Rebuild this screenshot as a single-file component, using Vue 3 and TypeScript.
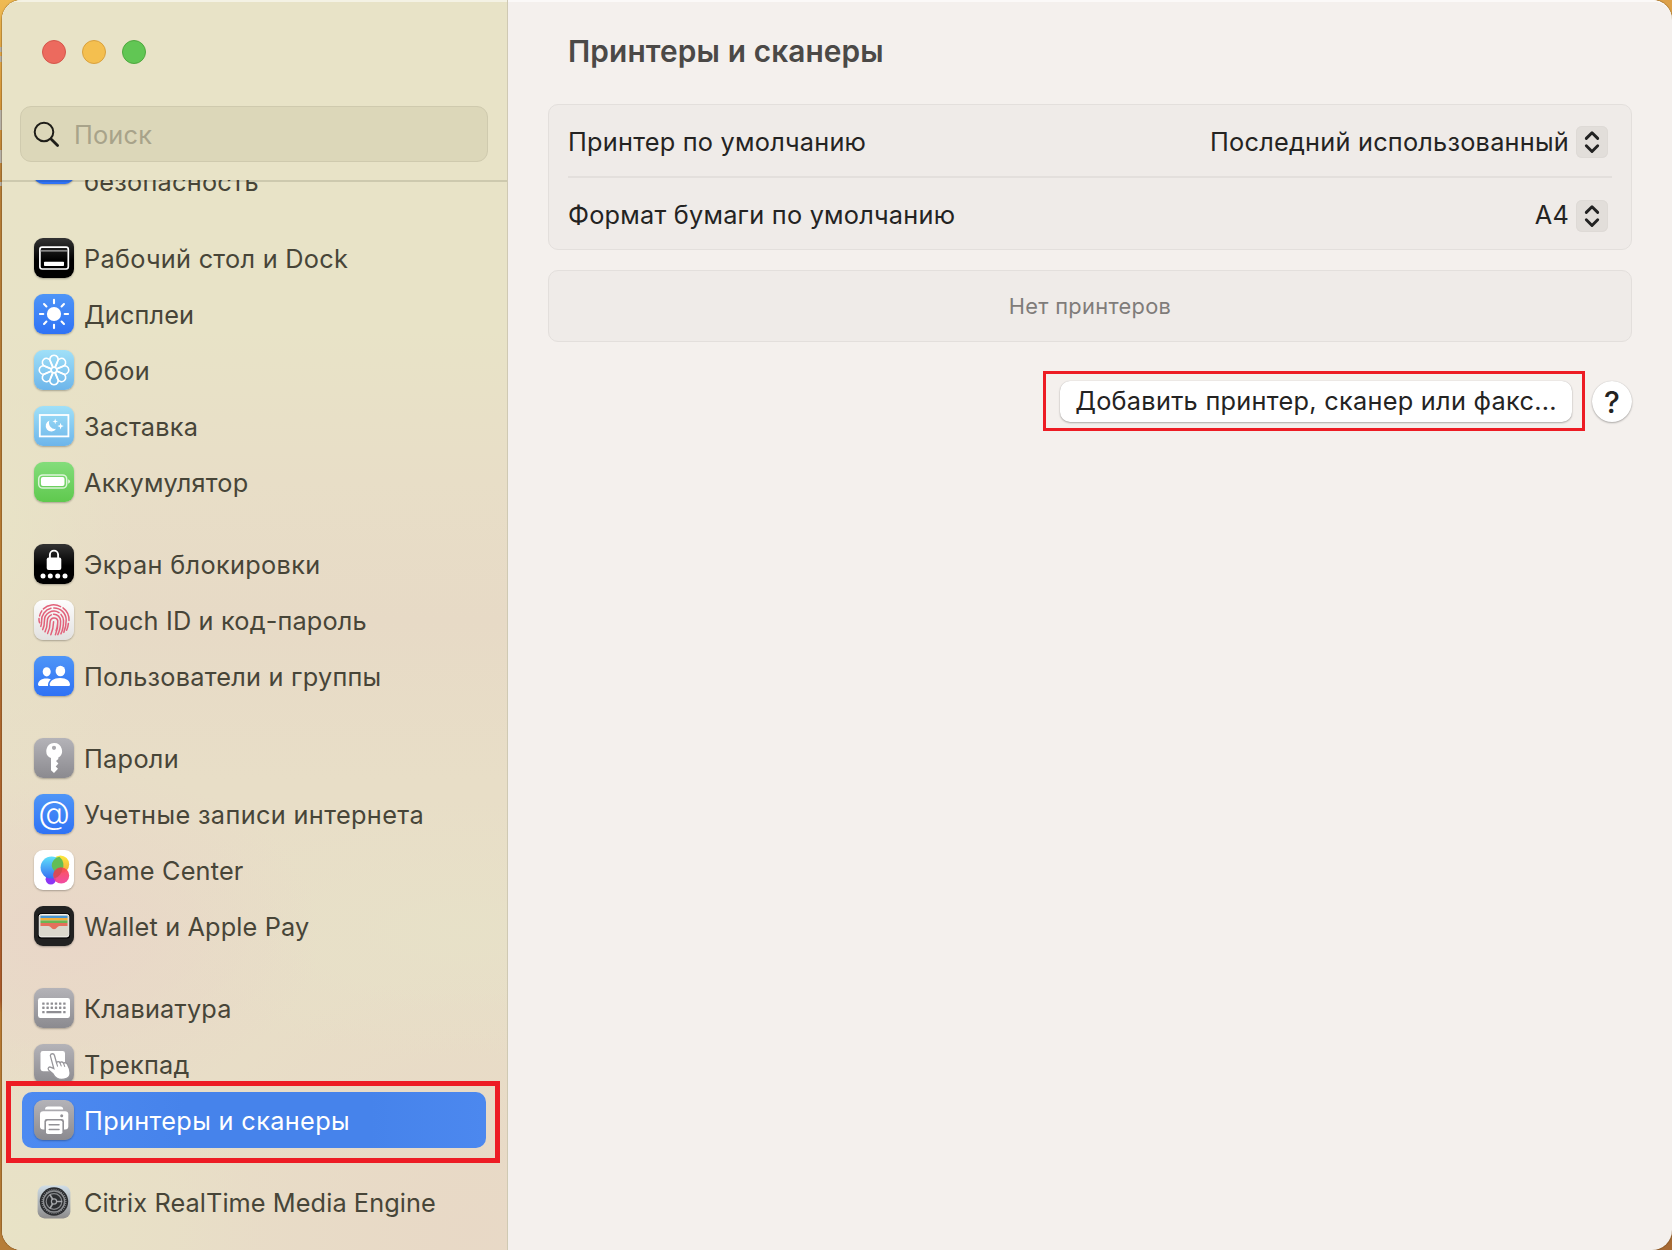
<script setup lang="ts">
interface Item {
  id: string
  label: string
  tracking: number
  tile: string
  glyph: string
  selected?: boolean
}

const petals = Array.from({ length: 8 }, (_, i) =>
  `<path transform="rotate(${i * 45} 20 20)" d="M18.9 18 16.300 11.400A4.200 4.200 0 1 1 23.700 11.400L21.100 18"/>`).join('')
const rays = Array.from({ length: 8 }, (_, i) =>
  `<path transform="rotate(${i * 45} 20 20)" d="M20 5.9v3.4"/>`).join('')
const keys = [15.6, 19.8].map(y => [9.4, 13.6, 17.8, 22, 26.2, 30.4].map(x =>
  `<rect x="${x - 1.2}" y="${y - 1.2}" width="2.4" height="2.4" rx=".4"/>`).join('')).join('')
const teeth = Array.from({ length: 36 }, (_, i) =>
  `<path transform="rotate(${i * 10} 20 20)" d="M20 7.4v1.6"/>`).join('')

const glyphs: Record<string, string> = {
  dock: '<rect x="5.9" y="9.2" width="28.4" height="21.8" rx="2.2" fill="none" stroke="#fff" stroke-width="1.7"/><path d="M6 12.8h28" stroke="#aaa" stroke-width="1.3"/><rect x="10" y="23.8" width="20" height="4.2" rx=".8" fill="#fff"/>',
  sun: `<circle cx="20" cy="20" r="7.1" fill="#fff"/><g stroke="#fff" stroke-width="2.1" stroke-linecap="round">${rays}</g>`,
  flower: `<g fill="none" stroke="#fff" stroke-width="1.6">${petals}<circle cx="20" cy="20" r="2.8"/></g>`,
  saver: '<rect x="5.8" y="9" width="28.6" height="21.4" fill="none" stroke="#fff" stroke-width="1.8"/><path d="M15.5 14.6a5.6 5.6 0 1 0 6.6 8.2 6 6 0 0 1-6.6-8.2z" fill="#fff"/><path d="M21.2 12.6l.7 2.1 2.1.7-2.1.7-.7 2.1-.7-2.1-2.1-.7 2.1-.7zM26.6 16.8l.8 2.5 2.4.8-2.4.8-.8 2.5-.8-2.5-2.4-.8 2.4-.8z" fill="#fff"/>',
  battery: '<rect x="4.7" y="12.9" width="28" height="13.2" rx="4.2" fill="none" stroke="#fff" stroke-opacity=".75" stroke-width="1.5"/><rect x="6.9" y="15.1" width="23.6" height="8.8" rx="2" fill="#fff"/><path d="M34.2 17.2q1.8.8 1.8 2.3t-1.8 2.3z" fill="#fff" fill-opacity=".8"/>',
  lock: '<rect x="12.7" y="13.6" width="14.6" height="12.4" rx="1.9" fill="#fff"/><path d="M15.9 14v-3.3a4.1 4.1 0 0 1 8.2 0V14" fill="none" stroke="#fff" stroke-width="1.9"/><g fill="#fff"><circle cx="9" cy="32" r="2.5"/><circle cx="16.3" cy="32" r="2.5"/><circle cx="23.7" cy="32" r="2.5"/><circle cx="31" cy="32" r="2.5"/></g>',
  finger: '<g fill="none" stroke="#e2617a" stroke-width="1.5" stroke-linecap="round"><path d="M9.4 8.9A15 15 0 0 1 26.6 6.6M29 7.9A15 15 0 0 1 35 20.5M5.6 15.9A15 15 0 0 1 7.8 10.8M5 18.6q-.2 2.2.6 4.2M34.4 23.4q-.3 3.6-1.8 6.8M6.8 26.4q.8-1.6.8-5.4A12.4 12.4 0 0 1 17 8.3M19.8 7.9A12.2 12.2 0 0 1 32.2 20q0 7-2.4 12.4M8.7 29.6q1.8-3.6 1.7-8.6A9.6 9.6 0 0 1 25 12.6M27 14.4a9.6 9.6 0 0 1 2.5 6q.2 7.6-2.6 13.4M11 31.8q2.3-4.6 2.3-10.8a6.7 6.7 0 0 1 4-6.1M19.6 14.2a6.8 6.8 0 0 1 7 6.8q0 8-2.8 13.6M13.6 33.5q2.6-5.4 2.6-12.2a3.9 3.9 0 0 1 7.6-.6q.5 7-2.4 14M16.8 34.7q2.6-5.8 2.8-12.9M23.6 23.8q-.4 4-1.5 7"/></g>',
  users: '<g fill="#fff"><ellipse cx="12.7" cy="15.8" rx="4" ry="4.6"/><ellipse cx="26.4" cy="15" rx="4.8" ry="5.3"/><path d="M4 28.6c0-3.500 3.200-6.200 8.400-6.200 1.900 0 3.400.4 4.400 1-2 1.500-3 3.600-2.800 6.700H5.300Q4 30 4 28.600z"/><path d="M15.600 28.700c0-3.500 4-6.700 10.500-6.700S36 25.200 36 28.700q0 1.400-1.400 1.400H17q-1.400 0-1.400-1.400z"/></g>',
  key: '<path fill="#fff" fill-rule="evenodd" d="M20 5a7.900 7.900 0 0 0-3 15.100V32.300L20 35l4-4.200-2.300-2.300 2.700-2.900-2.400-2.600 2.300-1.900V19.600A7.900 7.900 0 0 0 20 5zm0 2.700a2.100 2.100 0 1 1 0 4.200 2.100 2.100 0 0 1 0-4.200z"/>',
  at: '<text x="20" y="30.300" text-anchor="middle" fill="#fff" font-family="Inter, sans-serif" font-size="32.500" font-weight="300">@</text>',
  game: '<defs><linearGradient id="gcb" x1="0" y1="0" x2="0" y2="1"><stop offset="0" stop-color="#5fe0fa"/><stop offset="1" stop-color="#3670f2"/></linearGradient><linearGradient id="gcy" x1="0" y1="0" x2="0" y2="1"><stop offset="0" stop-color="#fbe93c"/><stop offset="1" stop-color="#f3a63b"/></linearGradient><linearGradient id="gcr" x1="0" y1="0" x2="0" y2="1"><stop offset="0" stop-color="#fb4a4a"/><stop offset="1" stop-color="#f03d9d"/></linearGradient></defs><circle cx="16.8" cy="29.3" r="5.200" fill="#8b36f4"/><circle cx="26.400" cy="14.300" r="8.800" fill="url(#gcy)"/><circle cx="17.600" cy="17.600" r="11" fill="url(#gcb)"/><path d="M17.700 16a8.800 8.800 0 0 1 7.700-9.200 11 11 0 0 1 2.700 14q-.6 1.400-1.400 2.300a8.800 8.800 0 0 1-9-7.100z" fill="#62bd55"/><circle cx="27.200" cy="25.500" r="8" fill="url(#gcr)" fill-opacity=".93"/><path d="M19.400 23.600a8 8 0 0 1 9-6A11 11 0 0 1 20.500 28.200a8 8 0 0 1-1.100-4.600z" fill="#d14b50" fill-opacity=".75"/>',
  wallet: '<rect x="3.900" y="7.200" width="32.200" height="25.200" rx="3.200" fill="#000"/><rect x="5.200" y="8.500" width="29.600" height="22.400" rx="2" fill="#dbd8cd" stroke="#f4f3ef" stroke-width="1"/><path fill="#4897d3" d="M6.500 9.800h27v2.200h-27z"/><path fill="#f2ae3b" d="M6.500 12h27v2.600h-27z"/><path fill="#69b653" d="M6.500 14.600h27v2.500h-27z"/><path fill="#e56f5c" d="M6.500 17.100h27v3h-8q-1.600 0-2.500 1.500a3.500 3.500 0 0 1-6 0q-.9-1.500-2.500-1.500h-8z"/>',
  keyboard: `<rect x="4" y="10" width="32" height="20" rx="2.400" fill="#fff"/><g fill="#8f8e93">${keys}<rect x="8.200" y="22.900" width="2.400" height="2.400" rx=".4"/><rect x="12.400" y="22.900" width="15" height="2.400" rx=".4"/><rect x="29.200" y="22.900" width="2.400" height="2.400" rx=".4"/></g>`,
  trackpad: '<rect x="6.500" y="7" width="24.500" height="20.200" rx="2.400" fill="#fff"/><path d="M16.300 11.600c.6-2.500 3.600-2.400 4.200-.1l2 7.200c.8-1.400 2.800-1.300 3.500-.1 1-1.100 2.900-.7 3.500.6 1.300-1 3.300-.3 4 1.300 3.400 6 3.800 12.400-.8 13.900-6.600 2.200-11.300 0-13.600-4.400l-4.300-3.800c-1.700-2 .2-3.800 2.300-2.900l2.700 1.300z" fill="#fff" stroke="#97969b" stroke-width="1.300"/><path d="M22.500 18.700l1 3.400M26 18.600l1.200 3.300M29.500 19.200l1.200 3.200" stroke="#97969b" stroke-width="1.100" stroke-linecap="round"/>',
  printer: '<path d="M11 9.600q0-3 3-3h12.200q3 0 3 3z" fill="#fff"/><rect x="6" y="11.200" width="28.300" height="18.200" rx="3.200" fill="#fff"/><rect x="10.400" y="19" width="19.600" height="13" rx="2.400" fill="#929196"/><rect x="12" y="20.400" width="16.400" height="13.600" rx="1.800" fill="#fff"/><path d="M15.200 24.800h9.800M15.200 29.600h9.800" stroke="#929196" stroke-width="1.500" stroke-linecap="round"/><circle cx="27.700" cy="15.700" r="1.500" fill="#929196"/>',
  gear: `<defs><linearGradient id="grt" x1="0" y1="0" x2="0" y2="1"><stop offset="0" stop-color="#cfdde6"/><stop offset="1" stop-color="#8d8c8c"/></linearGradient></defs><rect x="3.600" y="3.600" width="32.800" height="32.800" rx="7" fill="url(#grt)"/><circle cx="20" cy="19.500" r="14.200" fill="#2b2d30"/><g transform="translate(0 -.5)"><g stroke="#8d8f92" stroke-width=".8">${teeth}</g><circle cx="20" cy="20" r="10.600" fill="none" stroke="#8b8d90" stroke-width="1.500"/><circle cx="20" cy="20" r="7.800" fill="none" stroke="#86888b" stroke-width="1.200"/><path d="M20 20h8.200M20 20l-4.200-7.100M20 20l-4.200 7.100" stroke="#a5a7aa" stroke-width="1.700"/><circle cx="20" cy="20" r="2.600" fill="#303236" stroke="#a5a7aa" stroke-width="1.200"/></g>`,
}

const groups: Item[][] = [
  [
    { id: 'dock', label: 'Рабочий стол и Dock', tracking: 0.28, tile: 'black', glyph: 'dock' },
    { id: 'displays', label: 'Дисплеи', tracking: 0.13, tile: 'blue', glyph: 'sun' },
    { id: 'wallpaper', label: 'Обои', tracking: 0.4, tile: 'sky', glyph: 'flower' },
    { id: 'saver', label: 'Заставка', tracking: 0.2, tile: 'sky', glyph: 'saver' },
    { id: 'battery', label: 'Аккумулятор', tracking: 0.2, tile: 'green', glyph: 'battery' },
  ],
  [
    { id: 'lock', label: 'Экран блокировки', tracking: 0.33, tile: 'black', glyph: 'lock' },
    { id: 'touch', label: 'Touch ID и код-пароль', tracking: 0.16, tile: 'light', glyph: 'finger' },
    { id: 'users', label: 'Пользователи и группы', tracking: 0.23, tile: 'blue', glyph: 'users' },
  ],
  [
    { id: 'passwords', label: 'Пароли', tracking: 0.3, tile: 'gray', glyph: 'key' },
    { id: 'accounts', label: 'Учетные записи интернета', tracking: 0.36, tile: 'blue', glyph: 'at' },
    { id: 'game', label: 'Game Center', tracking: 0.18, tile: 'white', glyph: 'game' },
    { id: 'wallet', label: 'Wallet и Apple Pay', tracking: 0.13, tile: 'ink', glyph: 'wallet' },
  ],
  [
    { id: 'keyboard', label: 'Клавиатура', tracking: 0.22, tile: 'gray', glyph: 'keyboard' },
    { id: 'trackpad', label: 'Трекпад', tracking: 0.27, tile: 'gray', glyph: 'trackpad' },
    { id: 'printers', label: 'Принтеры и сканеры', tracking: 0.34, tile: 'gray', glyph: 'printer', selected: true },
  ],
  [
    { id: 'citrix', label: 'Citrix RealTime Media Engine', tracking: 0.08, tile: 'none', glyph: 'gear' },
  ],
]

const settings = [
  { label: 'Принтер по умолчанию', value: 'Последний использованный' },
  { label: 'Формат бумаги по умолчанию', value: 'A4' },
]
</script>

<template>
  <div class="desktop">
    <div class="window">
      <aside class="sidebar">
        <div class="top">
          <div class="lights"><i class="red" /><i class="yellow" /><i class="green" /></div>
          <div class="search">
            <svg width="28" height="28" viewBox="0 0 28 28" fill="none" stroke="#1f1e19" stroke-linecap="round">
              <circle cx="11" cy="11" r="9.300" stroke-width="2" />
              <path d="M18 18l6.600 6.600" stroke-width="2.800" />
            </svg>
            <span>Поиск</span>
          </div>
        </div>
        <nav class="list">
          <div class="cut"><i class="tile blue" /><span>безопасность</span></div>
          <div v-for="(group, g) in groups" :key="g" class="group">
            <div v-for="item in group" :key="item.id" class="item" :class="{ selected: item.selected }">
              <svg class="tile" :class="item.tile" width="40" height="40" viewBox="0 0 40 40" v-html="glyphs[item.glyph]" />
              <span :style="{ letterSpacing: item.tracking + 'px' }">{{ item.label }}</span>
            </div>
          </div>
        </nav>
        <div class="mark mark-side" />
      </aside>
      <main class="content">
        <h1>Принтеры и сканеры</h1>
        <section class="card">
          <div v-for="(s, i) in settings" :key="i" class="setting">
            <span class="name">{{ s.label }}</span>
            <span class="value">{{ s.value }}</span>
            <svg class="stepper" width="32" height="32" viewBox="0 0 32 32" fill="none" stroke="#222" stroke-width="2.900" stroke-linecap="round" stroke-linejoin="round">
              <path d="M10.300 12.400 16 6.700l5.700 5.700M10.300 19.800l5.700 5.700 5.700-5.700" />
            </svg>
          </div>
        </section>
        <section class="card empty"><span>Нет принтеров</span></section>
        <div class="actions">
          <div class="add-wrap">
            <button class="add"><span>Добавить принтер, сканер или факс...</span></button>
            <div class="mark mark-add" />
          </div>
          <button class="help">?</button>
        </div>
      </main>
    </div>
  </div>
</template>

<style>
body { overflow: hidden; }
</style>

<style scoped>
* { box-sizing: border-box; }
.desktop {
  width: 1672px;
  height: 1250px;
  padding-left: 2px;
  font-family: Inter, "Liberation Sans", sans-serif;
  background:
    linear-gradient(#b9b5ad, #b9b5ad) 0 47px / 2px 5px no-repeat,
    linear-gradient(#b9b5ad, #b9b5ad) 0 56px / 2px 6px no-repeat,
    linear-gradient(#b9b5ad, #b9b5ad) 0 110px / 2px 20px no-repeat,
    linear-gradient(#b9b5ad, #b9b5ad) 0 150px / 2px 13px no-repeat,
    linear-gradient(#b9b5ad, #b9b5ad) 0 182px / 2px 4px no-repeat,
    linear-gradient(#efba52 0, #d99a3e 8%, #b9803a 14%, #b57a35 36%, #bb7f35 45%, #b06a30 55%, #ac5a2c 80%, #bb7c35 81%, #b67d38 100%) 0 0 / 40px 100% no-repeat,
    linear-gradient(#dda14a, #a86a34);
}
.window {
  display: flex;
  height: 1250px;
  border-radius: 20px;
  overflow: hidden;
  background: #f4f0ed;
  box-shadow: inset 0 1px 0 #fff, 0 0 1px 1px rgba(90, 60, 20, .35);
}
.sidebar {
  position: relative;
  display: flex;
  flex-direction: column;
  width: 506px;
  flex: none;
  border-right: 1px solid #cfc9b3;
  box-shadow: inset 0 2px 0 #f4f2e4;
  background:
    radial-gradient(ellipse 260px 170px at 60px 935px, rgba(233, 214, 200, .95), rgba(233, 214, 200, 0)),
    radial-gradient(ellipse 260px 200px at 0 1230px, rgba(232, 227, 198, .95), rgba(232, 227, 198, 0)),
    radial-gradient(ellipse 300px 260px at 470px 1230px, rgba(232, 216, 198, .9), rgba(232, 216, 198, 0)),
    radial-gradient(ellipse 340px 130px at 460px 930px, rgba(231, 225, 200, .95), rgba(231, 225, 200, 0)),
    radial-gradient(ellipse 130px 340px at 0 520px, rgba(232, 227, 198, .9), rgba(232, 227, 198, 0)),
    linear-gradient(180deg, #e8e3c7 0, #e8e3c7 330px, #e8dec7 480px, #e7dac6 620px, #e8dec7 780px, #e8ddc7 1250px);
}
.top {
  height: 180px;
  flex: none;
  padding: 40px 20px 0 18px;
}
.lights { display: flex; gap: 16px; padding-left: 22px; height: 66px; }
.lights i { width: 24px; height: 24px; border-radius: 50%; border: 1px solid; }
.red { background: #ec6a5e; border-color: #d5564b !important; }
.yellow { background: #f4bf4f; border-color: #d9a13e !important; }
.lights .green { background: #61c654; border-color: #4fa83f !important; }
.search {
  display: flex;
  align-items: center;
  width: 468px;
  height: 56px;
  border-radius: 11px;
  border: 1px solid #cfcaae;
  background: #dcd7b9;
  padding-left: 12px;
  font-size: 25.300px;
  color: #a8a38a;
}
.search svg { margin-top: 1px; }
.search span { margin-left: 13px; padding-top: 1px; letter-spacing: .2px; }
.list {
  position: relative;
  overflow: hidden;
  flex: 1;
  padding: 0 20px;
  color: #474538;
  font-size: 25.300px;
}
.list::before {
  content: "";
  position: absolute;
  z-index: 1;
  left: 0;
  right: 0;
  top: 0;
  height: 2px;
  background: rgba(20, 18, 0, .12);
}
.cut { display: flex; height: 50px; padding-left: 12px; }
.cut .tile { margin-top: -36px; }
.cut span { margin: -13px 0 0 10px; line-height: 30px; letter-spacing: .25px; }
.group { margin-bottom: 26px; }
.item {
  display: flex;
  align-items: center;
  height: 56px;
  width: 464px;
  padding-left: 12px;
  border-radius: 10px;
  white-space: nowrap;
}
.item span { margin-left: 10px; }
.selected { background: linear-gradient(90deg, #4d8af1, #4683eb 35%, #4683eb 75%, #4c88ef); color: #fff; }
.tile {
  display: block;
  width: 40px;
  height: 40px;
  flex: none;
  border-radius: 9px;
  box-shadow: 0 1px 2px rgba(0, 0, 0, .28);
}
.black { background: linear-gradient(#333, #000 55%); }
.blue { background: linear-gradient(#4e95f7, #2f72f5); }
.cut .blue { background: #2f72f5; }
.sky { background: linear-gradient(#a0e0f8, #6db5ea); }
.green.tile { background: linear-gradient(#84dd7b, #5fc94e); }
.light { background: linear-gradient(#fdfdfd, #e2e1e0); }
.gray { background: linear-gradient(#b4b3b8, #8b8a8f); }
.white { background: #fff; }
.ink { background: #222; }
.none { box-shadow: none; }
.mark { position: absolute; border-style: solid; border-color: #ed1c24; }
.mark-side { left: 4px; top: 1081px; width: 494px; height: 82px; border-width: 5px; }
.content { flex: 1; padding: 33px 40px 0 40px; box-shadow: inset 0 2px 0 #fbf9f8; }
h1 {
  margin: 0 0 35px 20px;
  height: 36px;
  line-height: 36px;
  font-size: 29.800px;
  font-weight: 600;
  letter-spacing: .13px;
  color: #4b4947;
  white-space: nowrap;
}
.card {
  width: 1084px;
  height: 146px;
  border: 1px solid #e3dfdc;
  border-radius: 10px;
  background: #efebe8;
  padding: 0 19px;
  font-size: 25.300px;
  color: #242322;
  white-space: nowrap;
}
.setting { display: flex; align-items: center; height: 73px; padding-right: 4px; letter-spacing: .23px; }
.setting:first-child { padding-bottom: 1px; }
.setting + .setting { border-top: 2px solid #e3dfdc; height: 73px; margin-top: -2px; }
.setting + .setting .name, .setting + .setting .value { padding-top: 2px; }
.setting + .setting .stepper { margin-top: 4px; }
.value { margin-left: auto; margin-right: 7px; }
.stepper { background: #e2deda; border-radius: 6px; box-shadow: inset 0 0 0 1px #dedad6; margin-top: 2px; }
.empty {
  height: 72px;
  margin-top: 20px;
  display: flex;
  align-items: center;
  justify-content: center;
  font-size: 21.800px;
  letter-spacing: .3px;
  color: #7f7c7a;
}
.actions { display: flex; justify-content: flex-end; margin-top: 39px; gap: 20px; }
.add-wrap { position: relative; }
.mark-add { left: -17px; top: -10px; width: 542px; height: 60px; border-width: 3px; }
button { border: 0; padding: 0; font-family: inherit; background: #fff; color: #242322; white-space: nowrap; box-shadow: 0 1px 2px rgba(0, 0, 0, .28), 0 0 1px rgba(0, 0, 0, .2); }
.add { display: block; width: 512px; height: 41px; border-radius: 10px; font-size: 25.300px; letter-spacing: .28px; padding-bottom: 2px; }
.help { width: 40px; height: 41px; border-radius: 50%; font-size: 30px; font-weight: 450; }
</style>
